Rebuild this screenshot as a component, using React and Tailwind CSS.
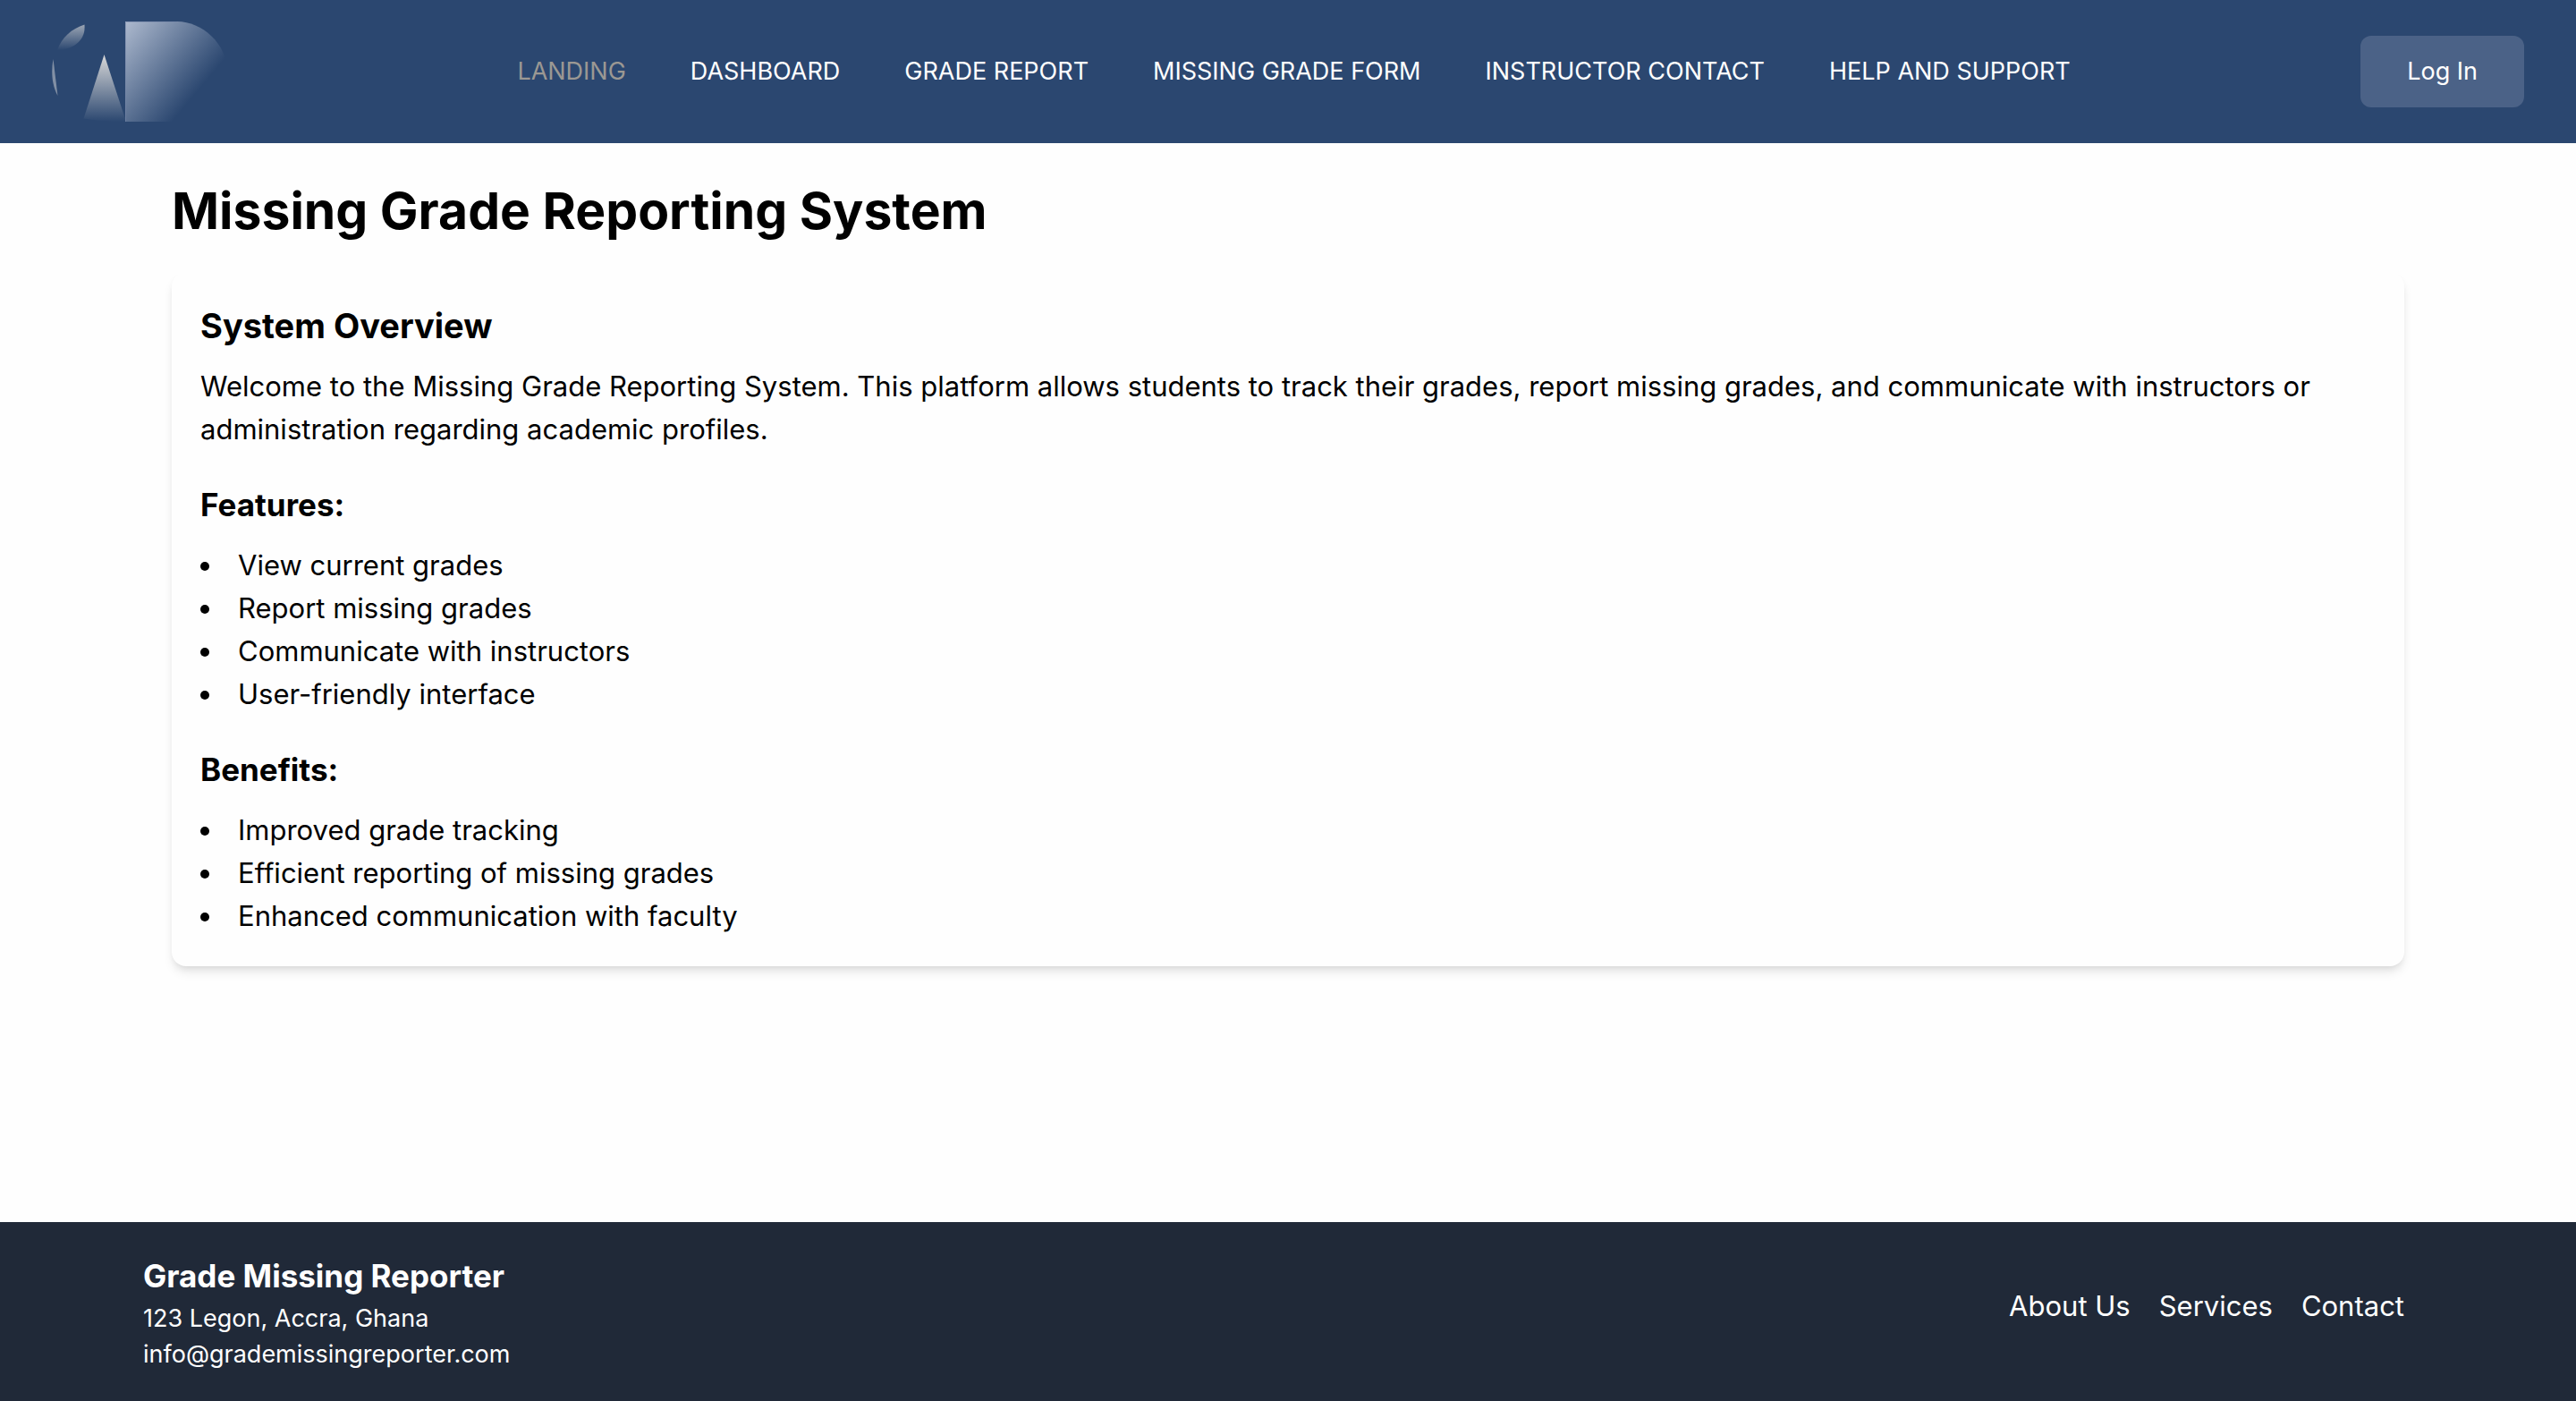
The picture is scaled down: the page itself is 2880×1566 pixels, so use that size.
const navItems = [
  { label: "LANDING", active: true },
  { label: "DASHBOARD" },
  { label: "GRADE REPORT" },
  { label: "MISSING GRADE FORM" },
  { label: "INSTRUCTOR CONTACT" },
  { label: "HELP AND SUPPORT" },
];

const features = [
  "View current grades",
  "Report missing grades",
  "Communicate with instructors",
  "User-friendly interface",
];

const benefits = [
  "Improved grade tracking",
  "Efficient reporting of missing grades",
  "Enhanced communication with faculty",
];

function Logo() {
  return (
    <svg viewBox="0 0 196 112" className="h-28 w-49" role="img" aria-label="Logo">
      <defs>
        <linearGradient id="leaf" x1="0" y1="0" x2="0" y2="1">
          <stop offset="0" stopColor="#d9d9d9" stopOpacity="0.65" />
          <stop offset="1" stopColor="#d9d9d9" stopOpacity="0" />
        </linearGradient>
        <linearGradient id="peak" x1="0" y1="0" x2="0" y2="1">
          <stop offset="0" stopColor="#d9d9d9" />
          <stop offset="1" stopColor="#d9d9d9" stopOpacity="0" />
        </linearGradient>
        <linearGradient id="bowl" gradientUnits="userSpaceOnUse" x1="82" y1="0" x2="168" y2="72">
          <stop offset="0" stopColor="#d9e0ee" stopOpacity="0.75" />
          <stop offset="1" stopColor="#d9e0ee" stopOpacity="0" />
        </linearGradient>
      </defs>
      <path d="M6 32C11 18 22 8 36.500 3.500C38 20 26 31 6 32Z" fill="url(#leaf)" />
      <path d="M1.500 42C-1 56 0 71 6.500 83Z" fill="#d9d9d9" fillOpacity="0.5" />
      <path d="M58.500 37L82 109V112C66 112 50 111 35.500 108.500Z" fill="url(#peak)" />
      <path d="M82 0H140C168 0 196 25 196 56C196 87 171 112 140 112H82Z" fill="url(#bowl)" />
      <path d="M82.500 112V0.500H140" fill="none" stroke="#7486a8" strokeOpacity="0.6" />
    </svg>
  );
}

function BulletList({ title, items }) {
  return (
    <section className="mt-8">
      <h3 className="mb-4 text-[35px] leading-14 font-bold">{title}</h3>
      <ul className="list-inside list-disc">
        {items.map((item) => (
          <li key={item}>{item}</li>
        ))}
      </ul>
    </section>
  );
}

export default function App() {
  return (
    <div className="flex min-h-screen flex-col bg-[#fefefe] font-['Inter',sans-serif] text-[31px] leading-12 text-black">
      <header className="flex h-40 items-center justify-between bg-[#2b4770] px-14.5 text-[27px] leading-10 text-white">
        <a href="#home" aria-label="Home">
          <Logo />
        </a>
        <nav className="flex gap-18">
          {navItems.map((item) => (
            <a
              key={item.label}
              href="#nav"
              aria-current={item.active ? "page" : undefined}
              className={item.active ? "text-[#9b9893]" : "text-white"}
            >
              {item.label}
            </a>
          ))}
        </nav>
        <button type="button" className="h-20 rounded-xl bg-[#4b6287] px-13">
          Log In
        </button>
      </header>

      <main className="grow px-48 pt-10">
        <h1 className="mb-8 text-[57px] leading-18 font-bold">Missing Grade Reporting System</h1>
        <div className="rounded-2xl bg-[#fefefe] p-8 shadow-[0_8px_12px_-2px_rgba(0,0,0,0.1),0_4px_8px_-4px_rgba(0,0,0,0.1)]">
          <h2 className="mb-4 text-[38px] leading-14 font-bold">System Overview</h2>
          <p>
            Welcome to the Missing Grade Reporting System. This platform allows students to track
            their grades, report missing grades, and communicate with instructors or administration
            regarding academic profiles.
          </p>
          <BulletList title="Features:" items={features} />
          <BulletList title="Benefits:" items={benefits} />
        </div>
      </main>

      <footer className="flex items-center justify-between bg-[#202938] py-8 pr-48 pl-40 text-white">
        <div className="text-[27px] leading-10">
          <h3 className="text-[35px] leading-14 font-bold">Grade Missing Reporter</h3>
          <p>123 Legon, Accra, Ghana</p>
          <p>info@grademissingreporter.com</p>
        </div>
        <nav className="flex gap-8 pb-3">
          <a href="#about">About Us</a>
          <a href="#services">Services</a>
          <a href="#contact">Contact</a>
        </nav>
      </footer>
    </div>
  );
}
